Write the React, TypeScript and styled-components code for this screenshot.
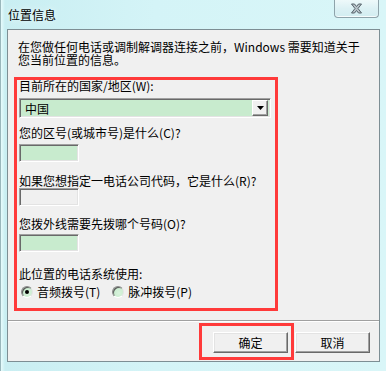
import React from 'react';
import styled, { createGlobalStyle } from 'styled-components';

const GlobalStyle = createGlobalStyle`
	html, body {
		margin: 0;
		padding: 0;
		background: #ffffff;
	}
	body {
		font-family: 'Noto Sans CJK SC', 'Liberation Sans', sans-serif;
		font-size: 12px;
		color: #000;
	}
`;

const RED = '#ff3a3a';
const FIELD_GREEN = '#c8ebce';

// window frame (aero basic, light cyan)
const Window = styled.div`
	width: 386px;
	height: 371px;
	display: flex;
	flex-direction: column;
	box-sizing: border-box;
	overflow: hidden;
	background: linear-gradient(90deg, #e6fbfc 0px, #c9eef2 4px, #d4f4f7 40%, #d9f6f8 100%);
	border-left: 1px solid #9ab7bc;
`;

const TitleBar = styled.div`
	height: 29px;
	flex: none;
	display: flex;
	justify-content: space-between;
	align-items: flex-start;
`;

const Title = styled.div`
	padding-left: 7px;
	line-height: 29px;
	font-size: 12px;
	color: #000;
	text-shadow: 0 0 6px rgba(255, 255, 255, 0.9);
`;

const CloseButton = styled.div`
	width: 45px;
	height: 18px;
	margin-right: 7px;
	box-sizing: border-box;
	border: 1px solid #8ea3aa;
	border-top: none;
	border-radius: 0 0 4px 4px;
	background: linear-gradient(180deg, #eef9fa 0%, #dcf1f4 50%, #d2edf1 100%);
	box-shadow: inset 0 -1px 0 rgba(255, 255, 255, 0.8);
	display: flex;
	align-items: center;
	justify-content: center;
`;

const Client = styled.div`
	flex: 1;
	margin: 0 6px 9px 6px;
	border: 1px solid #7d8e94;
	background: #f0f0f0;
	display: flex;
	flex-direction: column;
`;

const Intro = styled.div`
	padding: 10px 0 0 10px;
	line-height: 13px;
	white-space: nowrap;
`;

const Highlight = styled.div`
	margin: 11px 0 0 6px;
	width: 264px;
	box-sizing: border-box;
	border: 3px solid ${RED};
	padding: 0 4px 10px 2px;
	display: flex;
	flex-direction: column;
`;

const Label = styled.div<{ $gap: number }>`
	margin-top: ${(p) => p.$gap}px;
	line-height: 12px;
	white-space: nowrap;
`;

const sunken = `
	box-sizing: border-box;
	border-top: 1px solid #a0a0a0;
	border-left: 1px solid #a0a0a0;
	border-bottom: 1px solid #ffffff;
	border-right: 1px solid #ffffff;
	box-shadow: inset 1px 1px 0 #696969, inset -1px -1px 0 #e3e3e3;
`;

const Combo = styled.div`
	${sunken}
	margin-top: 6px;
	height: 20px;
	display: flex;
	align-items: center;
	justify-content: space-between;
	background: ${FIELD_GREEN};
	padding: 2px;
`;

const ComboText = styled.span`
	padding-left: 3px;
	font-size: 12px;
`;

const DropButton = styled.div`
	width: 16px;
	height: 16px;
	box-sizing: border-box;
	background: #f0f0f0;
	border-top: 1px solid #ffffff;
	border-left: 1px solid #ffffff;
	border-bottom: 1px solid #696969;
	border-right: 1px solid #696969;
	box-shadow: inset -1px -1px 0 #a0a0a0;
	display: flex;
	align-items: center;
	justify-content: center;
`;

const Field = styled.div<{ $gap: number; $filled?: boolean }>`
	${sunken}
	margin-top: ${(p) => p.$gap}px;
	width: 60px;
	height: 18px;
	background: ${(p) => (p.$filled ? FIELD_GREEN : '#f0f0f0')};
`;

const RadioRow = styled.div`
	margin-top: 6px;
	display: flex;
	align-items: center;
	gap: 12px;
	padding-left: 2px;
`;

const RadioOption = styled.label`
	display: flex;
	align-items: center;
	gap: 4px;
	line-height: 12px;
	white-space: nowrap;
`;

const RadioDot = styled.span<{ $checked?: boolean }>`
	width: 12px;
	height: 12px;
	box-sizing: border-box;
	border-radius: 50%;
	border: 1px solid;
	border-color: #8a8a8a #e4e4e4 #ffffff #8a8a8a;
	background: radial-gradient(circle at 60% 60%, #d8f3dc 0%, ${FIELD_GREEN} 70%);
	display: flex;
	align-items: center;
	justify-content: center;
	box-shadow: inset 1px 1px 0 #5a5a5a;

	&::after {
		content: '';
		width: 4px;
		height: 4px;
		border-radius: 50%;
		background: #000;
		display: ${(p) => (p.$checked ? 'block' : 'none')};
	}
`;

const Separator = styled.div`
	margin-top: 9px;
	height: 1px;
	background: #a0a0a0;
	border-bottom: 1px solid #ffffff;
`;

const ButtonRow = styled.div`
	display: flex;
	justify-content: flex-end;
	gap: 7px;
	padding: 10px 9px 0 0;
`;

const Button = styled.div`
	width: 75px;
	height: 21px;
	box-sizing: border-box;
	background: #f0f0f0;
	border-top: 1px solid #ffffff;
	border-left: 1px solid #ffffff;
	border-bottom: 1px solid #696969;
	border-right: 1px solid #696969;
	box-shadow: inset -1px -1px 0 #a0a0a0, inset 1px 1px 0 #e3e3e3;
	display: flex;
	align-items: center;
	justify-content: center;
	font-size: 12px;
	line-height: 12px;
`;

// the red annotation frame over the OK button
const Marked = styled.div`
	position: relative;

	&::after {
		content: '';
		position: absolute;
		top: -9px;
		bottom: -7px;
		left: -14px;
		right: -6px;
		border: 3px solid ${RED};
		pointer-events: none;
	}
`;

const CloseGlyph = () => (
	<svg width="13" height="11" viewBox="0 0 13 11">
		<path
			d="M1.5 1 H4.5 L6.5 3.5 L8.5 1 H11.5 L8 5.5 L11.5 10 H8.5 L6.5 7.5 L4.5 10 H1.5 L5 5.5 Z"
			fill="#b8c2c8"
			stroke="#56636b"
			strokeWidth="1"
			strokeLinejoin="round"
		/>
	</svg>
);

const DropArrow = () => (
	<svg width="7" height="4" viewBox="0 0 7 4">
		<path d="M0 0 H7 L3.5 4 Z" fill="#000" />
	</svg>
);

export default function App() {
	return (
		<>
			<GlobalStyle />
			<Window>
				<TitleBar>
					<Title>位置信息</Title>
					<CloseButton>
						<CloseGlyph />
					</CloseButton>
				</TitleBar>
				<Client>
					<Intro>
						在您做任何电话或调制解调器连接之前，Windows 需要知道关于
						<br />
						您当前位置的信息。
					</Intro>
					<Highlight>
						<Label $gap={0}>目前所在的国家/地区(W):</Label>
						<Combo>
							<ComboText>中国</ComboText>
							<DropButton>
								<DropArrow />
							</DropButton>
						</Combo>
						<Label $gap={9}>您的区号(或城市号)是什么(C)?</Label>
						<Field $gap={5} $filled />
						<Label $gap={13}>如果您想指定一电话公司代码，它是什么(R)?</Label>
						<Field $gap={1} />
						<Label $gap={12}>您拨外线需要先拨哪个号码(O)?</Label>
						<Field $gap={4} $filled />
						<Label $gap={16}>此位置的电话系统使用:</Label>
						<RadioRow>
							<RadioOption>
								<RadioDot $checked />
								音频拨号(T)
							</RadioOption>
							<RadioOption>
								<RadioDot />
								脉冲拨号(P)
							</RadioOption>
						</RadioRow>
					</Highlight>
					<Separator />
					<ButtonRow>
						<Marked>
							<Button>确定</Button>
						</Marked>
						<Button>取消</Button>
					</ButtonRow>
				</Client>
			</Window>
		</>
	);
}
